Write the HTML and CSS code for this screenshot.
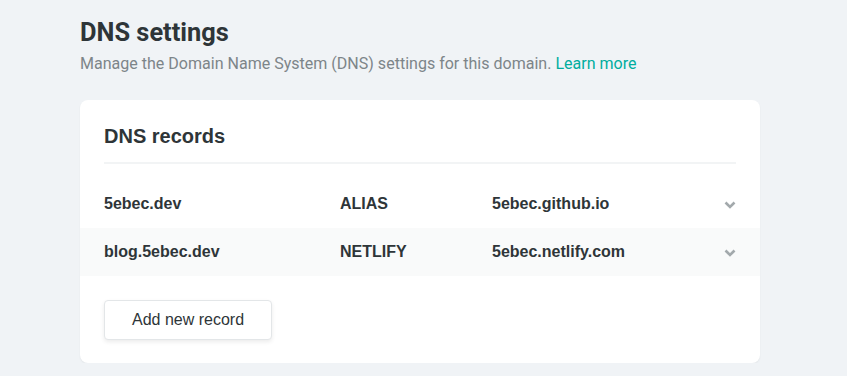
FILE: index.html
```html
<!DOCTYPE html>
<html lang="en">
<head>
    <meta charset="UTF-8">
    <meta name="viewport" content="width=device-width, initial-scale=1.0">
    <title>DNS settings</title>
    <link rel="stylesheet" href="styles.css">
</head>
<body>
    <div class="page">
        <h1>DNS settings</h1>
        <p class="lead">Manage the Domain Name System (DNS) settings for this domain. <a href="#">Learn more</a></p>

        <div class="card">
            <h2>DNS records</h2>
            <ul class="records">
                <li class="record">
                    <span class="name">5ebec.dev</span>
                    <span class="type">ALIAS</span>
                    <span class="value">5ebec.github.io</span>
                    <svg class="chevron" width="12" height="8" viewBox="0 0 12 8"><path d="M1.5 1.5 L6 6 L10.5 1.5" fill="none" stroke="currentColor" stroke-width="2.6"/></svg>
                </li>
                <li class="record">
                    <span class="name">blog.5ebec.dev</span>
                    <span class="type">NETLIFY</span>
                    <span class="value">5ebec.netlify.com</span>
                    <svg class="chevron" width="12" height="8" viewBox="0 0 12 8"><path d="M1.5 1.5 L6 6 L10.5 1.5" fill="none" stroke="currentColor" stroke-width="2.6"/></svg>
                </li>
            </ul>
            <button type="button">Add new record</button>
        </div>
    </div>
</body>
</html>
```

FILE: styles.css
```css
body {
    margin: 0;
    background-color: #f0f3f6;
    font-family: "Liberation Sans", Arial, sans-serif;
    color: #2e3538;
}
.page {
    width: 680px;
    margin-left: 80px;
    padding-top: 16px;
}
h1 {
    font-family: Roboto, "Liberation Sans", sans-serif;
    font-size: 25.4px;
    font-weight: 700;
    margin: 0;
    line-height: 32px;
    color: #2e3538;
}
.lead {
    font-family: Roboto, "Liberation Sans", sans-serif;
    font-size: 16.05px;
    color: #7d8589;
    margin: 4px 0 0;
    line-height: 24px;
}
.lead a {
    color: #00ad9f;
    text-decoration: none;
}
.card {
    background-color: #fff;
    border-radius: 8px;
    margin-top: 24px;
    padding: 20px 0 23px;
    box-shadow: 0 1px 2px rgba(0, 0, 0, 0.06);
}
h2 {
    font-size: 20px;
    font-weight: 700;
    margin: 0 24px;
    padding-bottom: 10px;
    line-height: 32px;
    border-bottom: 2px solid #f2f4f5;
}
.records {
    list-style: none;
    margin: 16px 0 24px;
    padding: 0;
}
.record {
    display: flex;
    align-items: center;
    height: 48px;
    padding: 0 24px;
    font-size: 16px;
    font-weight: 700;
}
.record:nth-child(even) {
    background-color: #f9fafa;
}
.name {
    width: 236px;
}
.type {
    width: 152px;
}
.value {
    flex: 1;
}
.chevron {
    color: #a3a9ac;
    margin-top: 2px;
}
button {
    display: block;
    margin-left: 24px;
    background-color: #fff;
    color: #2e3538;
    font-family: "Liberation Sans", Arial, sans-serif;
    font-size: 16px;
    width: 168px;
    height: 40px;
    border: 1px solid #e3e6e8;
    border-radius: 4px;
    box-shadow: 0 2px 4px rgba(0, 0, 0, 0.08);
    cursor: pointer;
}
```
